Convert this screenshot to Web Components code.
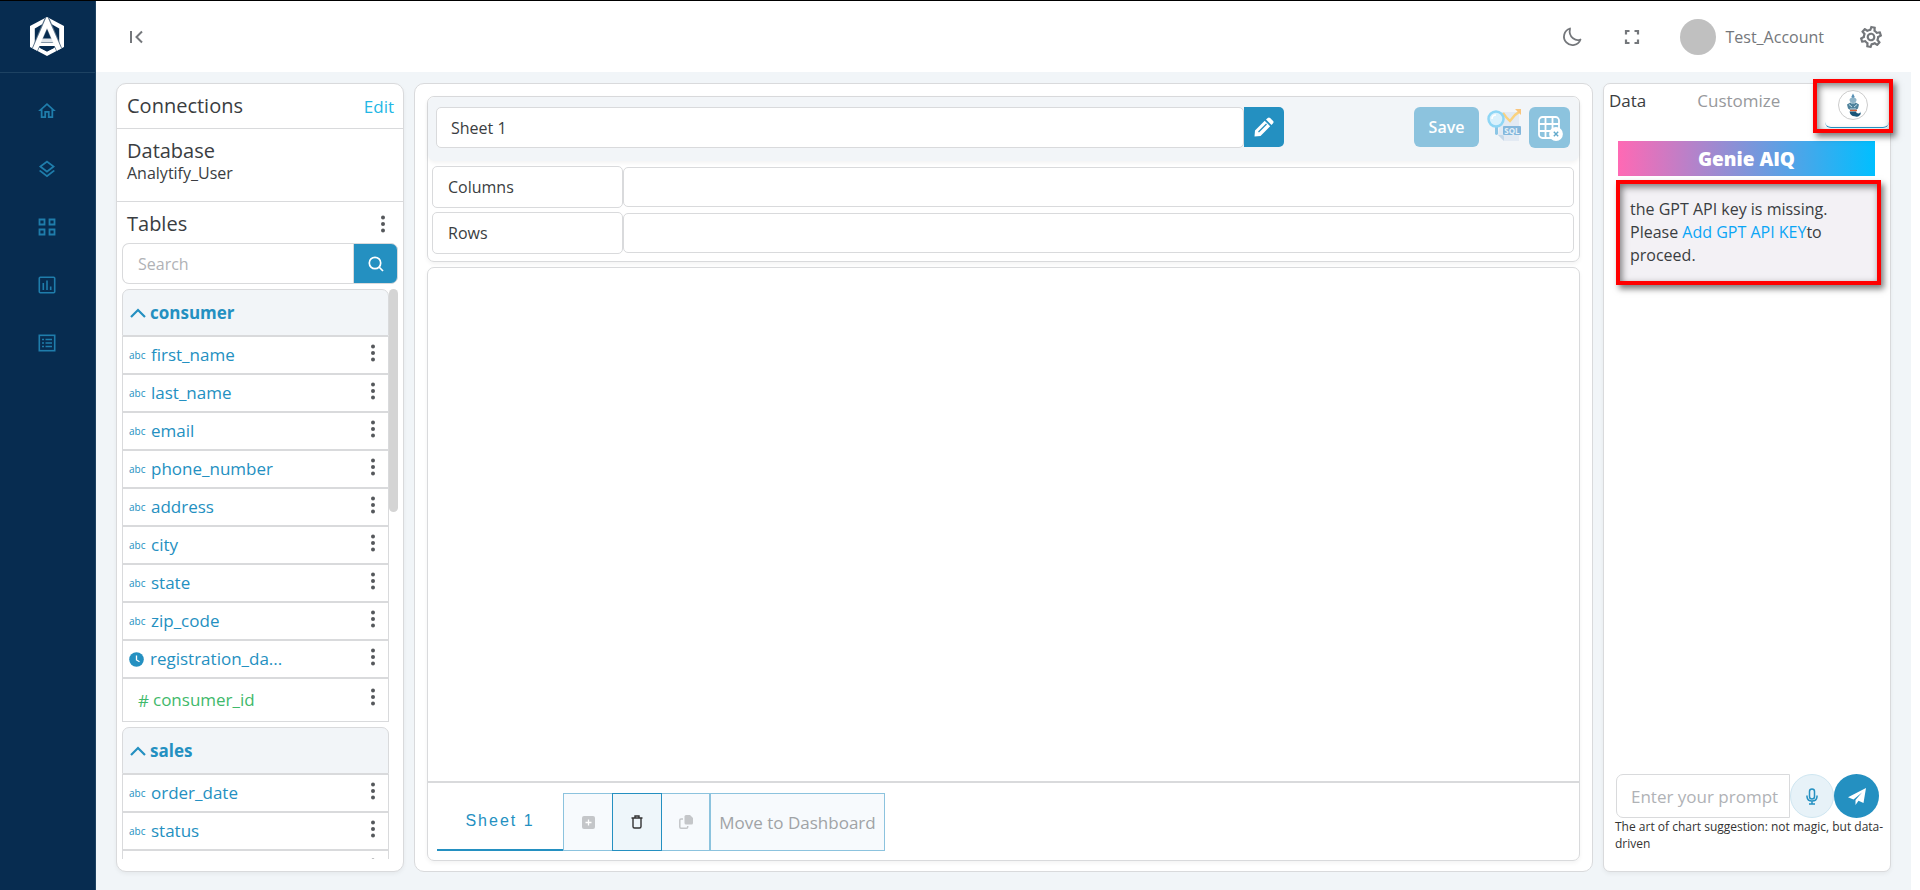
<!DOCTYPE html>
<html lang="en">
<head>
<meta charset="utf-8">
<title>Analytify – Sheet 1</title>
<style>
  html, body { margin: 0; min-height: 100vh; }
  body { font-family: "Open Sans", "Noto Sans", sans-serif; font-size: 16px; color: #3a3d41; background: #fff; }
</style>
</head>
<body>
<analytify-app></analytify-app>
<script>
const base = `
  *, *::before, *::after { box-sizing: border-box; }
  button, input { font: inherit; color: inherit; margin: 0; }
  button { cursor: pointer; padding: 0; border: 0; background: none; display: flex; align-items: center; justify-content: center; }
  a { text-decoration: none; }
  svg { display: block; }
`;
function define(name, css, html) {
  customElements.define(name, class extends HTMLElement {
    constructor() {
      super();
      const root = this.attachShadow({ mode: 'open' });
      const t = document.createElement('template');
      t.innerHTML = `<style>${base}${css}</style>${typeof html === 'function' ? html(this) : html}`;
      root.append(t.content.cloneNode(true));
    }
  });
}

define('kebab-button', `
  :host { display: block; }
  button { width: 16px; height: 20px; color: #55585c; }
`, `<button type="button" aria-label="More options"><svg width="4" height="18" viewBox="0 0 4 18" fill="currentColor"><circle cx="2" cy="2.5" r="2"/><circle cx="2" cy="9" r="2"/><circle cx="2" cy="15.5" r="2"/></svg></button>`);

define('side-nav', `
  :host { display: flex; flex-direction: column; background: #072c50; border-right: 1px solid #1d4262; }
  .logo { height: 72px; padding-right: 1px; display: flex; align-items: center; justify-content: center; border-bottom: 1px solid #1d4262; }
  nav { display: flex; flex-direction: column; align-items: center; gap: 34px; padding: 26px 1px 0 0; }
  nav a { color: #1f7dab; }
`, `
  <div class="logo"><svg width="34" height="39" viewBox="0 0 34 39"><defs><clipPath id="hex"><path d="M17 0 34 9V30L17 39 0 30V9Z"/></clipPath></defs><g clip-path="url(#hex)"><path d="M0 0h34v39H0Z" fill="#fff"/><path d="M17 4.500 29.200 11.500V28L17 34.500 4.800 28V11.500Z" fill="#072c50"/><path d="M3.500 36 17 4 30.500 36" fill="none" stroke="#5c7389" stroke-width="6.600"/><path d="M10.500 21.500h13v3.500h-13Z" fill="#dfe5eb"/><path d="M10 25.500h14l1.500 3.500h-17Z" fill="#fff"/><path d="M9.500 29.500 17 31l7.500-1.500-.5 1.500-7 3.600-7-3.600Z" fill="#072c50"/><path d="M3.500 36 17 5 30.500 36" fill="none" stroke="#fff" stroke-width="5"/></g></svg></div>
  <nav aria-label="Main">
    <a href="#home" aria-label="Home"><svg width="24" height="24" viewBox="0 0 24 24" fill="currentColor"><path d="m12 5.690 5 4.500V18h-2v-6H9v6H7v-7.810l5-4.500M12 3 2 12h3v8h6v-6h2v6h6v-8h3L12 3z" transform="translate(1.300 1.300) scale(.89)"/></svg></a>
    <a href="#sources" aria-label="Data sources"><svg width="24" height="24" viewBox="0 0 24 24" fill="currentColor"><path d="M11.990 18.540l-7.370-5.730L3 14.070l9 7 9-7-1.630-1.270zM12 16l7.360-5.730L21 9l-9-7-9 7 1.630 1.270L12 16zm0-11.470L17.740 9 12 13.470 6.260 9 12 4.530z" transform="translate(1.300 1.600) scale(.89)"/></svg></a>
    <a href="#dashboards" aria-label="Dashboards"><svg width="24" height="24" viewBox="0 0 24 24" fill="none" stroke="currentColor" stroke-width="1.800"><path d="M4.500 4.500h5v5h-5zM14.500 4.500h5v5h-5zM4.500 14.500h5v5h-5zM14.500 14.500h5v5h-5z"/></svg></a>
    <a href="#charts" aria-label="Charts"><svg width="24" height="24" viewBox="0 0 24 24" fill="none" stroke="currentColor" stroke-width="1.600"><rect x="4.300" y="4.300" width="15.400" height="15.400" rx="1"/><path d="M8.300 10v7M12 7.500V17M15.700 13.500V17"/></svg></a>
    <a href="#lists" aria-label="Lists"><svg width="24" height="24" viewBox="0 0 24 24" fill="none" stroke="currentColor" stroke-width="1.600"><rect x="4.300" y="4.300" width="15.400" height="15.400"/><path d="M7 8.500h2M7 12h2M7 15.500h2M10.500 8.500H17M10.500 12H17M10.500 15.500H17"/></svg></a>
  </nav>
`);

define('top-bar', `
  :host { display: flex; align-items: center; justify-content: space-between; height: 72px; padding: 0 37px 0 33px; background: #fff; color: #74777b; }
  .tools { display: flex; align-items: center; }
  .tools button { width: 24px; height: 24px; }
  .full { margin-left: 36px; }
  .user { display: flex; align-items: center; gap: 9px; margin: 0 35px 0 36px; }
  .avatar { width: 36px; height: 36px; border-radius: 50%; background: #c0c0c0; }
`, `
  <button type="button" aria-label="Collapse menu"><svg width="16" height="14" viewBox="0 0 16 14" fill="none" stroke="currentColor" stroke-width="2"><path d="M2 1v12M13 1.500 7.500 7 13 12.500"/></svg></button>
  <div class="tools">
    <button type="button" aria-label="Dark mode"><svg width="22" height="22" viewBox="0 0 22 22" fill="none" stroke="currentColor" stroke-width="1.800" stroke-linejoin="round"><path d="M9 2.500A8.500 8.500 0 1 0 19.500 13.500 C15.500 15.500 7 12 9 2.500Z"/></svg></button>
    <button type="button" class="full" aria-label="Full screen"><svg width="16" height="16" viewBox="0 0 16 16" fill="none" stroke="currentColor" stroke-width="2.200"><path d="M2 5.500V2h3.500M10.500 2H14v3.500M14 10.500V14h-3.500M5.500 14H2v-3.500"/></svg></button>
    <div class="user"><span class="avatar"></span><span>Test_Account</span></div>
    <button type="button" aria-label="Settings"><svg width="24" height="24" viewBox="1 1 22 22" fill="currentColor"><path d="M19.430 12.980c.04-.32.07-.64.07-.98 0-.34-.03-.66-.07-.98l2.110-1.650c.19-.15.24-.42.12-.64l-2-3.460c-.09-.16-.26-.25-.44-.25-.06 0-.12.01-.17.03l-2.490 1c-.52-.4-1.080-.73-1.690-.98l-.38-2.650C14.460 2.180 14.250 2 14 2h-4c-.25 0-.46.18-.49.42l-.38 2.650c-.61.25-1.170.59-1.690.98l-2.490-1c-.06-.02-.12-.03-.18-.03-.17 0-.34.09-.43.25l-2 3.460c-.13.22-.07.49.12.64l2.110 1.650c-.04.32-.07.65-.07.98 0 .33.03.66.07.98l-2.110 1.650c-.19.15-.24.42-.12.64l2 3.460c.09.16.26.25.44.25.06 0 .12-.01.17-.03l2.490-1c.52.4 1.080.73 1.690.98l.38 2.650c.03.24.24.42.49.42h4c.25 0 .46-.18.49-.42l.38-2.650c.61-.25 1.170-.59 1.690-.98l2.490 1c.06.02.12.03.18.03.17 0 .34-.09.43-.25l2-3.460c.12-.22.07-.49-.12-.64l-2.110-1.650zm-1.980-1.710c.04.31.05.52.05.73 0 .21-.02.43-.05.73l-.14 1.130.89.7 1.080.84-.7 1.210-1.270-.51-1.040-.42-.9.68c-.43.32-.84.56-1.250.73l-1.060.43-.16 1.130-.2 1.350h-1.400l-.19-1.350-.16-1.130-1.060-.43c-.43-.18-.83-.41-1.230-.71l-.91-.7-1.060.43-1.270.51-.7-1.210 1.080-.84.89-.7-.14-1.130c-.03-.31-.05-.54-.05-.74s.02-.43.05-.73l.14-1.130-.89-.7-1.080-.84.7-1.210 1.270.51 1.040.42.9-.68c.43-.32.84-.56 1.250-.73l1.060-.43.16-1.130.2-1.350h1.390l.19 1.350.16 1.130 1.060.43c.43.18.83.41 1.230.71l.91.7 1.060-.43 1.270-.51.7 1.210-1.070.85-.89.7.14 1.130zM12 8c-2.210 0-4 1.790-4 4s1.790 4 4 4 4-1.790 4-4-1.790-4-4-4zm0 6c-1.100 0-2-.9-2-2s.9-2 2-2 2 .9 2 2-.9 2-2 2z" transform="rotate(12 12 12)"/></svg></button>
  </div>
`);

define('field-row', `
  :host { display: flex; align-items: center; height: 38px; padding: 0 7px 0 6px; border: 1px solid #d9dadc; color: #2490c1; background: #fff; font-size: 17px; }
  :host([kind="number"]) { height: 44px; color: #3fb96b; padding-left: 15px; }
  .type { font-size: 10px; width: 22px; line-height: 20px; }
  .clock, .hash { display: none; }
  :host([kind="date"]) .clock { display: block; margin-right: 6px; }
  :host([kind="date"]) .type, :host([kind="number"]) .type, :host(:empty) .type { display: none; }
  :host([kind="number"]) .hash { display: block; margin-right: 4px; }
  .name { flex: 1; line-height: 24px; }
  kebab-button { align-self: flex-start; margin-top: 6px; }
  :host([kind="number"]) kebab-button { margin-top: 8px; }
`, `<span class="type">abc</span><svg class="clock" width="15" height="15" viewBox="0 0 15 15"><circle cx="7.500" cy="7.500" r="7.300" fill="#2490c1"/><path d="M7.500 3.500v4.500l3 1.800" fill="none" stroke="#fff" stroke-width="1.300"/></svg><span class="hash">#</span><span class="name"><slot></slot></span><kebab-button></kebab-button>`);

define('table-group', `
  :host { display: block; margin-bottom: 5px; }
  button { width: 100%; height: 47px; justify-content: flex-start; gap: 4px; padding: 0 7px; border: 1px solid #d9dadc; border-radius: 7px 7px 0 0; background: #f2f5f8; color: #2490c1; font-size: 17px; font-weight: 700; }
`, el => `<button type="button" aria-expanded="true"><svg width="16" height="10" viewBox="0 0 16 10" fill="none" stroke="currentColor" stroke-width="2.200"><path d="M1 9 8 2l7 7"/></svg><span>${el.getAttribute('name') || ''}</span></button><slot></slot>`);

define('connections-panel', `
  :host { display: flex; flex-direction: column; min-height: 0; background: #fff; border: 1px solid #d9dadc; border-radius: 10px; box-shadow: 0 2px 4px #0000000d; }
  h2 { margin: 0; font-size: 20px; line-height: 24px; font-weight: 400; }
  .head { display: flex; justify-content: space-between; align-items: center; height: 45px; padding: 0 9px 0 10px; border-bottom: 1px solid #d9dadc; }
  .head a { color: #23b7e5; font-size: 17px; }
  .db { height: 73px; padding: 10px 10px 0; border-bottom: 1px solid #d9dadc; }
  .db p { margin: 0; line-height: 20px; }
  .tables { display: flex; justify-content: space-between; align-items: center; height: 41px; padding: 3px 12px 0 10px; }
  .search { display: flex; height: 41px; margin: 0 5px 5px; }
  .search input { flex: 1; min-width: 0; border: 1px solid #d9dadc; border-right: 0; border-radius: 7px 0 0 7px; padding: 0 15px; outline: 0; background: #fff; }
  .search input::placeholder { color: #b0b2b6; opacity: 1; }
  .search button { width: 45px; background: #2490c1; border: 1px solid #d9dadc; border-radius: 0 7px 7px 0; }
  .list { flex: 1 1 0; min-height: 0; margin: 0 5px 12px; display: grid; grid-template-columns: 1fr 9px; overflow: hidden; }
  .track::before { content: ""; display: block; height: 223px; border-radius: 5px; background: #d4d4d4; }
`, `
  <div class="head"><h2>Connections</h2><a href="#edit">Edit</a></div>
  <div class="db"><h2>Database</h2><p>Analytify_User</p></div>
  <div class="tables"><h2>Tables</h2><kebab-button></kebab-button></div>
  <form class="search"><input type="search" placeholder="Search" aria-label="Search tables"><button type="button" aria-label="Search"><svg width="16" height="16" viewBox="0 0 16 16" fill="none" stroke="#fff" stroke-width="1.700"><circle cx="7" cy="7" r="5.700"/><path d="m11 11 4 4"/></svg></button></form>
  <div class="list">
    <div>
      <table-group name="consumer">
        <field-row>first_name</field-row><field-row>last_name</field-row><field-row>email</field-row><field-row>phone_number</field-row><field-row>address</field-row><field-row>city</field-row><field-row>state</field-row><field-row>zip_code</field-row><field-row kind="date">registration_da...</field-row><field-row kind="number">consumer_id</field-row>
      </table-group>
      <table-group name="sales">
        <field-row>order_date</field-row><field-row>status</field-row><field-row></field-row>
      </table-group>
    </div>
    <div class="track"></div>
  </div>
`);

define('shelf-row', `
  :host { display: grid; grid-template-columns: 191px 1fr; align-items: center; height: 42px; }
  .label { height: 42px; line-height: 40px; padding: 0 15px; border: 1px solid #d9dadc; border-radius: 5px; }
  .drop { height: 40px; border: 1px solid #d9dadc; border-radius: 5px; }
`, `<div class="label"><slot></slot></div><div class="drop"></div>`);

define('sheet-editor', `
  :host { display: flex; flex-direction: column; gap: 5px; min-width: 0; padding: 12px; padding-bottom: 10px; background: #fff; border: 1px solid #d9dadc; border-radius: 10px; }
  .card { border: 1px solid #d9dadc; border-radius: 7px; box-shadow: 0 2px 4px #0000000d; }
  .setup { height: 166px; }
  .bar { display: flex; align-items: flex-start; height: 64px; padding: 10px 9px 0 8px; background: #f2f5f8; border-radius: 7px; box-shadow: 0 2px 4px #0000000d; }
  .bar input { flex: 0 1 808px; min-width: 0; height: 41px; padding: 0 14px; border: 1px solid #d9dadc; border-radius: 5px; background: #fff; outline: 0; }
  .edit { width: 40px; height: 40px; background: #2490c1; border-radius: 0 5px 5px 0; }
  .save { width: 65px; height: 40px; margin-left: auto; background: #8cc3de; color: #fff; border-radius: 6px; font-weight: 600; }
  .sql { margin: 2px 8px 0; width: 34px; }
  .gridx { width: 41px; height: 41px; background: #8cc3de; border-radius: 6px; }
  .shelves { display: grid; gap: 4px; padding: 5px 5px 0 4px; }
  .canvas { flex: 1; display: flex; flex-direction: column; }
  .view { flex: 1; }
  .foot { height: 79px; border-top: 2px solid #d9dadc; padding: 10px 9px 0; display: flex; align-items: flex-start; }
  .foot button { height: 58px; border: 1px solid #8cc3de; background: #f7fafd; }
  .foot .tab { width: 126px; border: 0; border-bottom: 2px solid #2490c1; background: none; color: #2490c1; font-family: "Liberation Sans", sans-serif; letter-spacing: 2px; }
  .foot .add { width: 49px; border-right: 0; color: #c4c6c9; }
  .foot .del { width: 50px; border-color: #2490c1; background: #eef6fa; }
  .foot .copy { width: 48px; border-left: 0; color: #c4c6c9; }
  .foot .move { width: 175px; color: #a0a3a6; font-size: 17px; }
`, `
  <section class="card setup">
    <div class="bar">
      <input type="text" value="Sheet 1" aria-label="Sheet name">
      <button type="button" class="edit" aria-label="Rename sheet"><svg width="20" height="20" viewBox="0 0 20 20"><path d="M1 13.500 10.700 3.800l5.500 5.500L6.500 19 .5 19.500ZM12 2.500 13.700.9q1.200-1 2.400 0l3 3q1 1.200 0 2.400L17.500 8Z" fill="#fff"/><path d="M4.500 15l8-8" stroke="#2490c1" stroke-width="1.200"/></svg></button>
      <button type="button" class="save">Save</button>
      <span class="sql"><svg width="34" height="34" viewBox="0 0 34 34"><path d="M15 3H30q2 0 2 2V32H17L11 26Z" fill="#e3eaf3"/><path d="M11 26h4q2 0 2 2v4Z" fill="#c5d8e8"/><path d="M16 4l3 4 4 4 5-6 4-3" fill="none" stroke="#fad27e" stroke-width="2.400"/><path d="M28 0h6v6Z" fill="#f9c57c"/><path d="M8 16h3v9q-1.500 2-3 0Z" fill="#8cc6e6"/><circle cx="9" cy="10" r="7.500" fill="#d9f1fc" stroke="#8ed6f5" stroke-width="2.500"/><path d="M5 10q0-4 4-4" stroke="#fff" stroke-width="1.500" fill="none"/><rect x="16" y="17" width="18" height="9" rx="1" fill="#84b7dc"/><text x="25" y="24.500" text-anchor="middle" font-family="Open Sans" font-size="8" font-weight="700" fill="#e7f1f8">SQL</text></svg></span>
      <button type="button" class="gridx" aria-label="Clear table"><svg width="26" height="26" viewBox="0 0 26 26" fill="none" stroke="#fff" stroke-width="1.800"><rect x="2" y="2" width="20" height="21" rx="3.500"/><path d="M2 9h20M2 16h20M8.500 2v21M15.500 2v21"/><circle cx="19" cy="19" r="6" fill="#fff"/><path d="m16.800 16.800 4.400 4.400m0-4.400-4.400 4.400" stroke="#62a9cb" stroke-width="1.400"/></svg></button>
    </div>
    <div class="shelves"><shelf-row>Columns</shelf-row><shelf-row>Rows</shelf-row></div>
  </section>
  <section class="card canvas">
    <div class="view"></div>
    <div class="foot">
      <button type="button" class="tab">Sheet 1</button>
      <button type="button" class="add" aria-label="Add sheet"><svg width="13" height="13" viewBox="0 0 13 13"><rect width="13" height="13" rx="2" fill="currentColor"/><path d="M6.500 3.500v6M3.500 6.500h6" stroke="#fff" stroke-width="1.300"/></svg></button>
      <button type="button" class="del" aria-label="Delete sheet"><svg width="12" height="14" viewBox="0 0 12 14" fill="none" stroke="#333" stroke-width="1.400"><path d="M.5 3h11M2 3v8.500q0 1.500 1.500 1.500h5q1.500 0 1.500-1.500V3M4 3V1h4v2"/></svg></button>
      <button type="button" class="copy" aria-label="Duplicate sheet"><svg width="14" height="14" viewBox="0 0 14 14"><path d="M7 0H11l3 3v5q0 1.500-1.500 1.500H7q-1.500 0-1.500-1.500V1.500Q5.500 0 7 0Z" fill="currentColor"/><path d="M4 4H2Q.8 4 .8 5.200V12q0 1.200 1.200 1.200h5.500q1.200 0 1.200-1.200v-1" fill="none" stroke="currentColor" stroke-width="1.500"/></svg></button>
      <button type="button" class="move">Move to Dashboard</button>
    </div>
  </section>
`);

define('genie-panel', `
  :host { display: flex; flex-direction: column; min-width: 0; background: #fff; border: 1px solid #d9dadc; border-radius: 7px; box-shadow: 0 2px 4px #0000000d; }
  .tabs { position: relative; display: flex; height: 57px; padding-left: 5px; align-items: flex-start; font-size: 17px; }
  .tabs button { line-height: 24px; margin-top: 5px; }
  .tabs .custom { margin-left: 51px; color: #97999c; }
  .tabs .genie { position: absolute; top: -5px; right: -3px; margin: 0; width: 80px; height: 54px; border: 4px solid #f00; background: #fff; box-shadow: 3px 4px 6px #00000080, inset 2px 3px 7px #00000080; }
  .genie span { align-self: flex-end; width: 64px; height: 38px; margin: 0 0 1px 8px; padding-right: 9px; display: flex; justify-content: center; border-bottom: 1px solid #2490c1; border-radius: 0 0 6px 6px; }
  .banner { margin: 0 15px 4px 14px; height: 35px; line-height: 36px; text-align: center; color: #fff; font-size: 19px; font-weight: 800; background: linear-gradient(90deg, #ff69b4, #00bfff); }
  .msg { margin: 0 9px 0 12px; height: 105px; padding: 14px 10px; line-height: 23px; border: 4px solid #f00; background: #f3f1f5; box-shadow: 3px 4px 6px #00000080, inset 2px 3px 7px #00000080; }
  .msg p { margin: 0; }
  .msg a { color: #0aa5f5; }
  .prompt { display: flex; margin: auto 11px 0 12px; height: 44px; }
  .prompt input { flex: 1; min-width: 0; padding: 0 4px 0 14px; border: 1px solid #d9dadc; border-radius: 7px 0 0 7px; outline: 0; background: #fff; font-size: 17px; }
  .prompt input::placeholder { color: #b0b2b6; opacity: 1; }
  .prompt button { border-radius: 50%; }
  .mic { width: 44px; background: #e7f2f8; border: 1px solid #cfe6f1; }
  .send { width: 45px; background: #2490c1; }
  .note { margin: 0 0 0 11px; height: 53px; font-size: 12px; line-height: 17px; color: #333; }
`, `
  <div class="tabs" role="tablist">
    <button type="button" role="tab">Data</button><button type="button" role="tab" class="custom">Customize</button>
    <button type="button" role="tab" class="genie" aria-label="Genie"><span><svg width="32" height="32" viewBox="0 0 32 32"><circle cx="16" cy="15" r="14.500" fill="#fff" stroke="#ccc"/><path d="M16 3.500l1.500 3-.5 2h-2l-.5-2Z" fill="#5790b5"/><ellipse cx="16" cy="10" rx="3.500" ry="2.500" fill="#8fb4c8"/><path d="M10 14.500q6-5 12 0l-1 4-3 2h-4l-3-2Z" fill="#4f829c"/><path d="M12 14.500l3 2.500M20 14.500l-3 2.500M13 19h6M14 13h4" stroke="#c5dfea"/><path d="M13 20.500h7" stroke="#d95f35" stroke-width="1.500"/><path d="M12.500 21.500h6.500q0 2 2.500 2 2 0 1.500-2 1.500 2-.5 4t-5 .8q-4 0-5-4.800Z" fill="#195477"/></svg></span></button>
  </div>
  <div class="banner">Genie AIQ</div>
  <div class="msg"><p>the GPT API key is missing. Please <a href="#key">Add GPT API KEY</a>to proceed.</p></div>
  <form class="prompt">
    <input type="text" placeholder="Enter your prompt" aria-label="Prompt">
    <button type="button" class="mic" aria-label="Voice input"><svg width="12" height="17" viewBox="0 0 12 17" fill="none" stroke="#2490c1" stroke-width="1.500"><rect x="3.500" y="1" width="5" height="10" rx="2.500"/><path d="M1 7.500v1.300q.5 4.200 5 4.200t5-4.200V7.500M6 13v3M3 16h6"/></svg></button>
    <button type="button" class="send" aria-label="Send"><svg width="18" height="17" viewBox="0 0 18 17" fill="#fff"><path d="M18 0 15.500 15 10.500 12.800 7.500 17V12L14 4.500 5.500 11.500 0 9.300Z"/></svg></button>
  </form>
  <div class="note">The art of chart suggestion: not magic, but data-driven</div>
`);

define('analytify-app', `
  :host { display: grid; grid-template-columns: 96px 1fr; height: 100vh; min-height: 600px; border-top: 1px solid #000; box-sizing: border-box; }
  .body { display: flex; flex-direction: column; min-width: 0; min-height: 0; }
  top-bar { flex: none; height: 71px; }
  main { flex: 1; min-height: 0; display: grid; grid-template-columns: 288px 1fr 288px; grid-template-rows: minmax(0, 1fr); gap: 10px; margin-right: 9px; padding: 11px 20px 18px; background: #f1f5f8; }
`, `
  <side-nav></side-nav>
  <div class="body"><top-bar></top-bar>
  <main><connections-panel></connections-panel><sheet-editor></sheet-editor><genie-panel></genie-panel></main></div>
`);
</script>
</body>
</html>
